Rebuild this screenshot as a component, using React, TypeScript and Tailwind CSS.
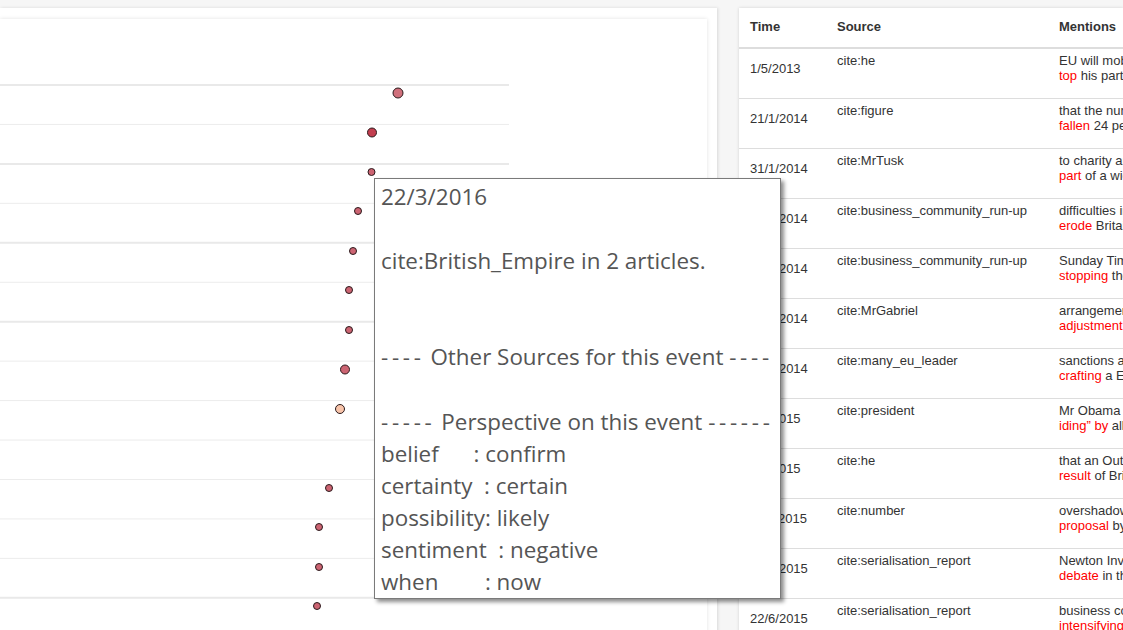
import React from 'react';

type Row = { time: string; source: string; line: string; hit: string; rest: string };

const rows: Row[] = [
    { time: '1/5/2013', source: 'cite:he', line: 'EU will mobilise against Cameron', hit: 'top', rest: ' his party agenda' },
    { time: '21/1/2014', source: 'cite:figure', line: 'that the number of migrants has', hit: 'fallen', rest: ' 24 per cent' },
    { time: '31/1/2014', source: 'cite:MrTusk', line: 'to charity and welfare', hit: 'part', rest: ' of a wider deal' },
    { time: '14/2/2014', source: 'cite:business_community_run-up', line: 'difficulties in the single market', hit: 'erode', rest: " Britain's influence" },
    { time: '18/3/2014', source: 'cite:business_community_run-up', line: 'Sunday Times reported that', hit: 'stopping', rest: ' the reforms' },
    { time: '24/3/2014', source: 'cite:MrGabriel', line: 'arrangements for the eurozone', hit: 'adjustment', rest: ' to treaties' },
    { time: '26/3/2014', source: 'cite:many_eu_leader', line: 'sanctions against Russia', hit: 'crafting', rest: ' a EU response' },
    { time: '7/4/2015', source: 'cite:president', line: 'Mr Obama said Britain', hit: 'iding” by', rest: ' allies' },
    { time: '9/5/2015', source: 'cite:he', line: 'that an Out vote would', hit: 'result', rest: ' of Britain leaving' },
    { time: '11/6/2015', source: 'cite:number', line: 'overshadowed by the', hit: 'proposal', rest: ' by ministers' },
    { time: '19/6/2015', source: 'cite:serialisation_report', line: 'Newton Investment Management', hit: 'debate', rest: ' in the party' },
    { time: '22/6/2015', source: 'cite:serialisation_report', line: 'business community warned', hit: 'intensifying', rest: ' the campaign' },
];

// chart rows: grid line y (page coords) and the dot sitting under it
const lineYs = Array.from({ length: 14 }, (_, i) => 85 + i * 39.45);
const thick = [0, 2, 4, 6, 13];

const dots = [
    { x: 398, y: 93, r: 5, fill: '#d0707c' },
    { x: 372, y: 132.5, r: 4.5, fill: '#c23e4f' },
    { x: 371.5, y: 172, r: 3.5, fill: '#cc6472' },
    { x: 358, y: 211, r: 3.5, fill: '#cc6472' },
    { x: 353, y: 251, r: 3.5, fill: '#cc6472' },
    { x: 349, y: 290, r: 3.5, fill: '#cc6472' },
    { x: 349, y: 330, r: 3.5, fill: '#cc6472' },
    { x: 345, y: 369.5, r: 4.5, fill: '#cc6472' },
    { x: 340, y: 409, r: 4.5, fill: '#f8c4aa' },
    { x: 329, y: 488, r: 3.5, fill: '#cc6472' },
    { x: 319, y: 527, r: 3.5, fill: '#cc6472' },
    { x: 319, y: 567, r: 3.5, fill: '#cc6472' },
    { x: 317, y: 606, r: 3.5, fill: '#cc6472' },
];

const tip = [
    '22/3/2016',
    '',
    'cite:British_Empire in 2 articles.',
    '',
    '',
    '---- Other Sources for this event ----',
    '',
    '----- Perspective on this event ------',
    'belief      : confirm',
    'certainty  : certain',
    'possibility: likely',
    'sentiment  : negative',
    'when        : now',
];

function TipLine({ text }: { text: string }) {
    const parts = text.split(/(-{2,})/);
    return (
        <>
            {parts.map((p, i) =>
                /^-+$/.test(p) ? (
                    <span key={i} className="tracking-[3.7px]">
                        {p}
                    </span>
                ) : (
                    <span key={i}>{p}</span>
                )
            )}
        </>
    );
}

export default function App() {
    return (
        <div className="relative h-[630px] w-[1123px] overflow-hidden bg-[#f6f6f6] pt-2 font-['Liberation_Sans',Arial,sans-serif]">
            <div className="flex h-full items-start">
                {/* Chart panel */}
                <div className="h-[700px] w-[717px] shrink-0 bg-white shadow-[1px_0_3px_rgba(0,0,0,0.12)]">
                    <div className="mt-[11px] h-[690px] w-[707px] bg-white shadow-[0_0_4px_rgba(0,0,0,0.12)]">
                        <svg width="707" height="640" viewBox="0 19 707 640" className="block">
                            {lineYs.map((y, i) => (
                                <line
                                    key={i}
                                    x1="0"
                                    x2="509"
                                    y1={y}
                                    y2={y}
                                    stroke={thick.includes(i) ? '#e9e9e9' : '#ececec'}
                                    strokeWidth={thick.includes(i) ? 2 : 1}
                                />
                            ))}
                            {dots.map((d, i) => (
                                <circle key={i} cx={d.x} cy={d.y} r={d.r} fill={d.fill} stroke="#2a1a1c" strokeWidth="1" />
                            ))}
                        </svg>
                    </div>
                </div>

                {/* Mentions table */}
                <div className="ml-[22px] h-[700px] flex-1 overflow-hidden bg-white text-[#333] shadow-[0_0_3px_rgba(0,0,0,0.15)]">
                    <div className="flex h-[41px] items-center border-b-2 border-[#dddddd] pb-[2px] text-[13px] font-bold">
                        <div className="w-[98px] shrink-0 pl-[11px]">Time</div>
                        <div className="w-[222px] shrink-0">Source</div>
                        <div className="whitespace-nowrap">Mentions</div>
                    </div>
                    {rows.map((r, i) => (
                        <div key={i} className="flex h-[50px] border-b border-[#dddddd] text-[13px] leading-[15px]">
                            <div className="w-[98px] shrink-0 pl-[11px] pt-[12px]">{r.time}</div>
                            <div className="w-[222px] shrink-0 pt-[4px]">{r.source}</div>
                            <div className="min-w-0 flex-1 whitespace-nowrap pt-[4px]">
                                <div>{r.line}</div>
                                <div>
                                    <span className="text-[#ff0000]">{r.hit}</span>
                                    {r.rest}
                                </div>
                            </div>
                        </div>
                    ))}
                </div>
            </div>

            {/* Hover tooltip */}
            <div className="absolute left-[374px] top-[178px] w-[407px] border border-[#7a7a7a] bg-white pl-[6px] pt-[2px] font-['Open_Sans',sans-serif] text-[22.4px] leading-[32.1px] text-[#555] shadow-[3px_3px_4px_rgba(0,0,0,0.45)]">
                {tip.map((t, i) => (
                    <div key={i} className="h-[32.1px] whitespace-pre">
                        <TipLine text={t} />
                    </div>
                ))}
            </div>
        </div>
    );
}
